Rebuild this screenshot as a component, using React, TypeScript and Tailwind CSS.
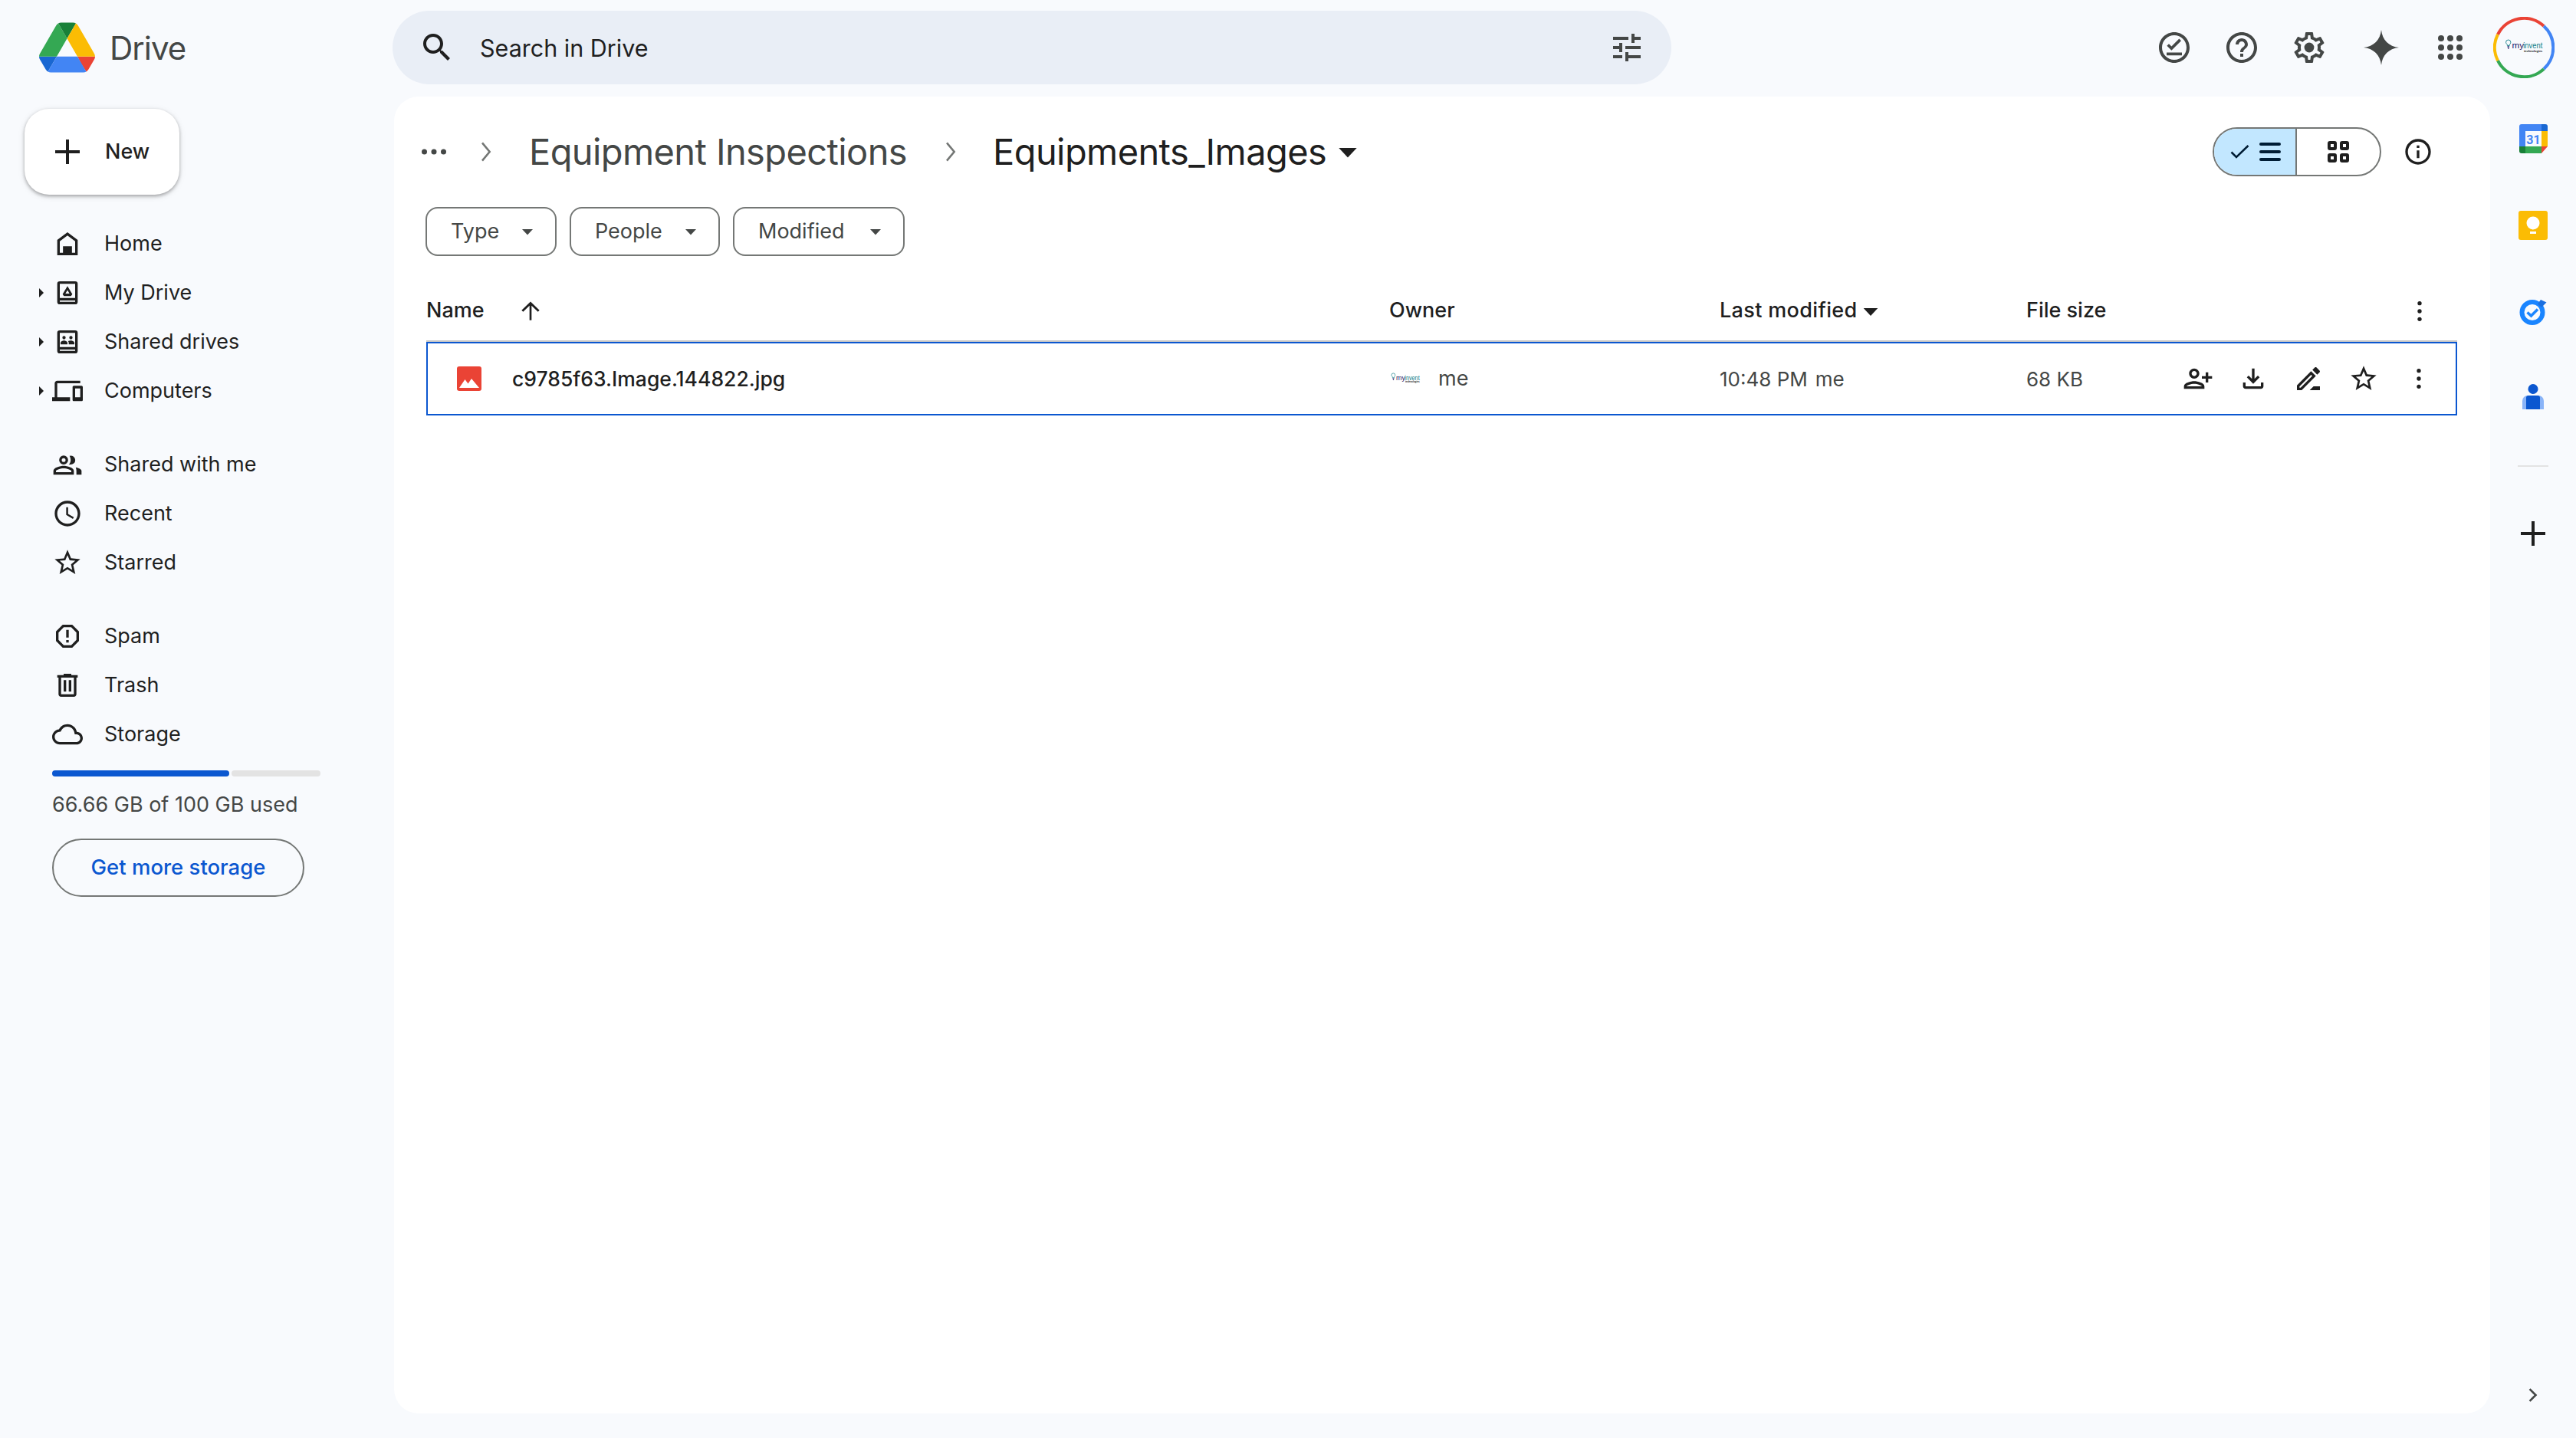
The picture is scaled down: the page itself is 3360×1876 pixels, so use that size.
import React from "react";

const FONT = "[font-family:Inter,'Noto_Sans',sans-serif]";

function I({ d, s = 40, c = "#1f1f1f", extra }: { d?: string; s?: number; c?: string; extra?: React.ReactNode }) {
  return (
    <svg width={s} height={s} viewBox="0 0 24 24" fill={c} className="shrink-0">
      {d && <path d={d} />}
      {extra}
    </svg>
  );
}

const P = {
  search: "M15.5 14h-.79l-.28-.27C15.41 12.59 16 11.11 16 9.5 16 5.91 13.09 3 9.5 3S3 5.91 3 9.5 5.91 16 9.5 16c1.61 0 3.09-.59 4.23-1.57l.27.28v.79l5 4.99L20.49 19l-4.99-5zm-6 0C7.01 14 5 11.99 5 9.5S7.01 5 9.5 5 14 7.01 14 9.5 11.99 14 9.5 14z",
  tune: "M3 17v2h6v-2H3zM3 5v2h10V5H3zm10 16v-2h8v-2h-8v-2h-2v6h2zM7 9v2H3v2h4v2h2V9H7zm14 4v-2H11v2h10zm-6-4h2V7h4V5h-4V3h-2v6z",
  circle: "M12 2C6.48 2 2 6.48 2 12s4.48 10 10 10 10-4.48 10-10S17.52 2 12 2zm0 18c-4.41 0-8-3.59-8-8s3.59-8 8-8 8 3.59 8 8-3.59 8-8 8z",
  help: "M11 18h2v-2h-2v2zm1-16C6.48 2 2 6.48 2 12s4.48 10 10 10 10-4.48 10-10S17.52 2 12 2zm0 18c-4.41 0-8-3.59-8-8s3.59-8 8-8 8 3.59 8 8-3.59 8-8 8zm0-14c-2.21 0-4 1.79-4 4h2c0-1.1.9-2 2-2s2 .9 2 2c0 2-3 1.75-3 5h2c0-2.25 3-2.5 3-5 0-2.21-1.79-4-4-4z",
  gear: "M19.43 12.98c.04-.32.07-.64.07-.98 0-.34-.03-.66-.07-.98l2.11-1.65c.19-.15.24-.42.12-.64l-2-3.46c-.09-.16-.26-.25-.44-.25-.06 0-.12.01-.17.03l-2.49 1c-.52-.4-1.08-.73-1.69-.98l-.38-2.65C14.46 2.18 14.25 2 14 2h-4c-.25 0-.46.18-.49.42l-.38 2.65c-.61.25-1.17.59-1.69.98l-2.49-1c-.06-.02-.12-.03-.18-.03-.17 0-.34.09-.43.25l-2 3.46c-.13.22-.07.49.12.64l2.11 1.65c-.04.32-.07.65-.07.98 0 .33.03.66.07.98l-2.11 1.65c-.19.15-.24.42-.12.64l2 3.46c.09.16.26.25.44.25.06 0 .12-.01.17-.03l2.49-1c.52.4 1.08.73 1.69.98l.38 2.65c.03.24.24.42.49.42h4c.25 0 .46-.18.49-.42l.38-2.65c.61-.25 1.17-.59 1.69-.98l2.49 1c.06.02.12.03.18.03.17 0 .34-.09.43-.25l2-3.46c.12-.22.07-.49-.12-.64l-2.11-1.65zm-1.98-1.71c.04.31.05.52.05.73 0 .21-.02.43-.05.73l-.14 1.13.89.7 1.08.84-.7 1.21-1.27-.51-1.04-.42-.9.68c-.43.32-.84.56-1.25.73l-1.06.43-.16 1.13-.2 1.35h-1.4l-.19-1.35-.16-1.13-1.06-.43c-.43-.18-.83-.41-1.23-.71l-.91-.7-1.06.43-1.27.51-.7-1.21 1.08-.84.89-.7-.14-1.13c-.03-.31-.05-.54-.05-.74s.02-.43.05-.73l.14-1.13-.89-.7-1.08-.84.7-1.21 1.27.51 1.04.42.9-.68c.43-.32.84-.56 1.25-.73l1.06-.43.16-1.13.2-1.35h1.39l.19 1.35.16 1.13 1.06.43c.43.18.83.41 1.23.71l.91.7 1.06-.43 1.27-.51.7 1.21-1.07.85-.89.7.14 1.13z",
  clock: "M11.99 2C6.47 2 2 6.48 2 12s4.47 10 9.99 10C17.52 22 22 17.52 22 12S17.52 2 11.99 2zM12 20c-4.42 0-8-3.58-8-8s3.58-8 8-8 8 3.58 8 8-3.58 8-8 8zm.5-13H11v6l5.25 3.15.75-1.23-4.5-2.67z",
  star: "M22 9.24l-7.19-.62L12 2 9.19 8.63 2 9.24l5.46 4.73L5.82 21 12 17.27 18.18 21l-1.63-7.03L22 9.24zM12 15.4l-3.76 2.27 1-4.28-3.32-2.88 4.38-.38L12 6.1l1.71 4.04 4.38.38-3.32 2.88 1 4.28L12 15.4z",
  spam: "M15.73 3H8.27L3 8.27v7.46L8.27 21h7.46L21 15.73V8.27L15.73 3zM19 14.9L14.9 19H9.1L5 14.9V9.1L9.1 5h5.8L19 9.1v5.8zM11 7h2v6h-2zM11 15h2v2h-2z",
  trash: "M15 4V3H9v1H4v2h1v13c0 1.1.9 2 2 2h10c1.1 0 2-.9 2-2V6h1V4h-5zm2 15H7V6h10v13zM9 8h2v9H9zm4 0h2v9h-2z",
  cloud: "M19.35 10.04C18.67 6.59 15.64 4 12 4 9.11 4 6.6 5.64 5.35 8.04 2.34 8.36 0 10.91 0 14c0 3.31 2.69 6 6 6h13c2.76 0 5-2.24 5-5 0-2.64-2.05-4.78-4.65-4.96zM19 18H6c-2.21 0-4-1.79-4-4 0-2.05 1.53-3.76 3.56-3.97l1.07-.11.5-.95C8.08 7.14 9.94 6 12 6c2.62 0 4.88 1.86 5.39 4.43l.3 1.5 1.53.11c1.56.1 2.78 1.41 2.78 2.96 0 1.65-1.35 3-3 3z",
  devices: "M4 6h18V4H4c-1.1 0-2 .9-2 2v11H0v3h14v-3H4V6zm19 2h-6c-.55 0-1 .45-1 1v10c0 .55.45 1 1 1h6c.55 0 1-.45 1-1V9c0-.55-.45-1-1-1zm-1 9h-4v-7h4v7z",
  home: "M12 3 4 9v12h16V9l-8-6zm6 16h-2.5v-5h-7v5H6v-9l6-4.5 6 4.5v9z",
  download: "M18 15v3H6v-3H4v3c0 1.1.9 2 2 2h12c1.1 0 2-.9 2-2v-3h-2zm-1-4-1.41-1.41L13 12.17V4h-2v8.17L8.41 9.59 7 11l5 5 5-5z",
  rename: "M14.06 9.02l.92.92L5.92 19H5v-.92l9.06-9.06M17.66 3c-.25 0-.51.1-.7.29l-1.83 1.83 3.75 3.75 1.83-1.83c.39-.39.39-1.02 0-1.41l-2.34-2.34c-.2-.2-.45-.29-.71-.29zm-3.6 3.19L3 17.25V21h3.75L17.81 9.94l-3.75-3.75zM13 21h8v-3h-5z",
  personAdd: "M15 12c2.21 0 4-1.79 4-4s-1.79-4-4-4-4 1.79-4 4 1.79 4 4 4zm0-6c1.1 0 2 .9 2 2s-.9 2-2 2-2-.9-2-2 .9-2 2-2zm0 8c-2.67 0-8 1.34-8 4v2h16v-2c0-2.66-5.33-4-8-4zm-6 4c.22-.72 3.31-2 6-2 2.7 0 5.8 1.29 6 2H9zm-3-3v-3h3v-2H6V7H4v3H1v2h3v3h2z",
  info: "M11 7h2v2h-2zm0 4h2v6h-2zm1-9C6.48 2 2 6.48 2 12s4.48 10 10 10 10-4.48 10-10S17.52 2 12 2zm0 18c-4.41 0-8-3.59-8-8s3.59-8 8-8 8 3.59 8 8-3.59 8-8 8z",
  plus: "M11 4h2v7h7v2h-7v7h-2v-7H4v-2h7z",
  chevron: "M9 5.5 10.2 4.5 16.4 12 10.2 19.5 9 18.5 14.4 12z",
  right: "M9.4 5.400 8 6.800 13.200 12 8 17.200l1.400 1.400L16 12z",
  up: "M11.200 19V7.600L6.200 12.500 5 11.200l7-6.700 7 6.700-1.200 1.300-5-4.900V19z",
};

function DriveBook({ people }: { people?: boolean }) {
  return (
    <I
      extra={
        <>
          <path d="M6 3h12a2 2 0 0 1 2 2v14a2 2 0 0 1-2 2H6a2 2 0 0 1-2-2V5a2 2 0 0 1 2-2zm0 2v11h12V5H6zm0 13v1h12v-1H6z" fillRule="evenodd" />
          {people ? (
            <path d="M9.3 7.4a1.3 1.3 0 1 1 0 2.6 1.3 1.3 0 0 1 0-2.6zm5.4 0a1.3 1.3 0 1 1 0 2.6 1.3 1.3 0 0 1 0-2.6zM6.6 14v-1.2c0-1.2 1.8-1.9 2.7-1.9s2.7.7 2.7 1.9V14H6.6zm6.4 0v-1.2c0-.5-.2-1-.6-1.4.7-.3 1.6-.5 2.3-.5.9 0 2.7.7 2.7 1.9V14H13z" />
          ) : (
            <path d="M12 6.8l3.8 6.2-1 1.6H9.2l-1-1.6L12 6.8zm0 3.1-1.6 2.7h3.2L12 9.9z" fillRule="evenodd" />
          )}
        </>
      }
    />
  );
}

function SharedMe() {
  return (
    <I
      extra={
        <>
          <path d="M9 5a3.5 3.5 0 1 1 0 7 3.5 3.5 0 0 1 0-7zm0 2a1.5 1.5 0 1 0 0 3 1.5 1.5 0 0 0 0-3zM9 13c2.7 0 8 1.3 8 4v3H1v-3c0-2.7 5.3-4 8-4zm0 2c-2.6 0-5.7 1.2-6 2v1h12v-1c-.3-.8-3.4-2-6-2z" fillRule="evenodd" />
          <path d="M13.6 5.2A3.5 3.5 0 1 1 14 12c-.4 0-.6 0-.9-.1 1-1 1.4-2.1 1.4-3.4 0-1.2-.3-2.3-.9-3.3zM18.5 14.2c2.3.5 4.5 1.4 4.5 2.8v3h-4v-3c0-1.1-.2-2-.5-2.8z" />
        </>
      }
    />
  );
}

const Caret = ({ c = "#444746", s = 24 }: { c?: string; s?: number }) => (
  <svg width={s} height={s} viewBox="0 0 24 24" className="shrink-0">
    <path d="M5 9h14l-7 7.500z" fill={c} />
  </svg>
);

const More = ({ s = 40 }: { s?: number }) => (
  <I s={s} extra={<><circle cx="12" cy="5.800" r="1.600" /><circle cx="12" cy="12" r="1.600" /><circle cx="12" cy="18.200" r="1.600" /></>} />
);

function NavRow({ icon, label, caret }: { icon: React.ReactNode; label: string; caret?: boolean }) {
  return (
    <div className="flex h-16 items-center text-[27px] text-[#1f1f1f]">
      <div className="flex w-[60px] pl-[48px]">
        {caret && (
          <svg width="12" height="16" viewBox="0 0 12 16"><path d="M3 2l6 6-6 6z" fill="#1f1f1f" /></svg>
        )}
      </div>
      <div className="flex w-[56px] justify-center">{icon}</div>
      <span className="ml-[20px]">{label}</span>
    </div>
  );
}

function Brand({ w, h }: { w: number; h: number }) {
  return (
    <svg width={w} height={h} viewBox="0 0 60 26" className="overflow-visible">
      <path d="M3 4.500a3.600 3.600 0 0 1 7.200 0c0 1.500-.9 2.600-1.800 3.400v1.600H5V7.900C3.900 7.100 3 6 3 4.500z" fill="none" stroke="#0e7c86" strokeWidth="1" />
      <rect x="5.200" y="10.500" width="3" height="1.600" fill="#1b1464" />
      <rect x="5.800" y="13" width="1.800" height="1.400" fill="#1b1464" />
      <text x="12" y="14" fontSize="12.500" fill="#1b1464" fontFamily="Liberation Sans, sans-serif" textLength="18" lengthAdjust="spacingAndGlyphs">my</text>
      <text x="29" y="14" fontSize="12.500" fill="#0e7c86" fontFamily="Liberation Sans, sans-serif" textLength="29" lengthAdjust="spacingAndGlyphs">invent</text>
      <text x="30" y="19" fontSize="4" fontWeight="700" fill="#222" fontFamily="Liberation Sans, sans-serif" textLength="28" lengthAdjust="spacingAndGlyphs">technologies</text>
    </svg>
  );
}

function HeaderIcon({ w, children }: { w: string; children: React.ReactNode }) {
  return <div className={`flex justify-center ${w}`}>{children}</div>;
}

function Chip({ label, w }: { label: string; w: string }) {
  return (
    <div className={`flex h-16 items-center justify-between rounded-2xl border-2 border-[#747775] pl-[31px] pr-[24px] text-[27px] text-[#444746] ${w}`}>
      <span>{label}</span>
      <Caret />
    </div>
  );
}

export default function App() {
  return (
    <div className={`flex h-[1876px] w-[3360px] flex-col overflow-hidden bg-[#f8fafd] ${FONT}`}>
      {/* Top bar */}
      <header className="flex h-[126px] shrink-0 items-start pt-[14px]">
        <div className="flex h-24 w-[512px] shrink-0 items-center pl-[51px]">
          <svg width="73" height="66" viewBox="0 0 87.3 78">
            <path d="m6.6 66.85 3.85 6.65c.8 1.4 1.95 2.5 3.3 3.3l13.75-23.8h-27.5c0 1.55.4 3.1 1.2 4.5z" fill="#1967d2" />
            <path d="m43.65 25-13.75-23.8c-1.35.8-2.5 1.9-3.3 3.3l-25.4 44a9.06 9.06 0 0 0 -1.2 4.5h27.5z" fill="#34a853" />
            <path d="m73.55 76.8c1.35-.8 2.5-1.9 3.3-3.3l1.6-2.75 7.65-13.25c.8-1.4 1.2-2.95 1.2-4.5h-27.502l5.852 11.5z" fill="#ea4335" />
            <path d="m43.65 25 13.75-23.8c-1.35-.8-2.9-1.2-4.5-1.2h-18.5c-1.6 0-3.15.45-4.5 1.2z" fill="#188038" />
            <path d="m59.8 53h-32.3l-13.75 23.8c1.35.8 2.9 1.2 4.5 1.2h50.8c1.6 0 3.15-.45 4.5-1.2z" fill="#4285f4" />
            <path d="m73.4 26.5-12.7-22c-.8-1.4-1.95-2.5-3.3-3.3l-13.75 23.8 16.15 28h27.45c0-1.55-.4-3.1-1.2-4.5z" fill="#fbbc04" />
          </svg>
          <span className="ml-[19px] text-[42px] tracking-[-1px] text-[#444746]">Drive</span>
        </div>
        <div className="flex h-24 w-[1668px] shrink-0 items-center rounded-[48px] bg-[#e9eef6] pl-[34px] pr-[34px]">
          <I d={P.search} s={48} c="#1f1f1f" />
          <span className="ml-[32px] pt-[2px] text-[30.500px] text-[#1f1f1f]">Search in Drive</span>
          <div className="ml-auto"><I d={P.tune} s={48} c="#444746" /></div>
        </div>
        <div className="flex h-24 items-center pl-[632px]">
          <HeaderIcon w="w-12"><I s={48} c="#444746" d={P.circle} extra={<path d="M7 15.3h10v1.8H7zM10.2 13.9 7.2 10.9l1.3-1.3 1.7 1.7 5-5 1.3 1.3z" />} /></HeaderIcon>
          <HeaderIcon w="w-12 ml-[40px]"><I s={48} c="#444746" d={P.help} /></HeaderIcon>
          <HeaderIcon w="w-12 ml-[40px]"><I s={48} c="#444746" d={P.gear} extra={<circle cx="12" cy="12" r="3.200" />} /></HeaderIcon>
          <HeaderIcon w="w-12 ml-[46px]"><I s={48} c="#444746" d="M12 .5c.7 6.6 4.9 10.8 11.5 11.5-6.6.7-10.8 4.9-11.5 11.5C11.3 16.9 7.1 12.700 .5 12 7.1 11.300 11.300 7.100 12 .5z" /></HeaderIcon>
          <HeaderIcon w="w-12 ml-[42px]">
            <I s={48} c="#444746" extra={[6, 12, 18].flatMap((y) => [6, 12, 18].map((x) => <circle key={`${x}${y}`} cx={x} cy={y} r="2" />))} />
          </HeaderIcon>
          <div className="relative ml-[32px] flex h-20 w-20 items-center justify-center">
            <svg width="80" height="80" viewBox="0 0 80 80" className="absolute inset-0">
              <g fill="none" strokeWidth="4">
                <path d="M6 23A38 38 0 0 1 66 12" stroke="#ea4335" />
                <path d="M66 12A38 38 0 0 1 66 68" stroke="#4285f4" />
                <path d="M66 68A38 38 0 0 1 6 57" stroke="#34a853" />
                <path d="M6 57A38 38 0 0 1 6 23" stroke="#fbbc04" />
              </g>
            </svg>
            <Brand w={52} h={23} />
          </div>
        </div>
      </header>

      <div className="flex min-h-0 flex-1">
        {/* Sidebar */}
        <aside className="w-[514px] shrink-0 pt-[16px]">
          <div className="ml-[32px] flex h-[112px] w-[202px] items-center rounded-[32px] bg-white pl-[32px] shadow-[0_2px_4px_rgba(0,0,0,0.3),0_2px_10px_rgba(0,0,0,0.1)]">
            <I d={P.plus} s={48} c="#1f1f1f" />
            <span className="ml-[25px] text-[27px] font-medium text-[#1f1f1f]">New</span>
          </div>
          <nav className="mt-8 flex flex-col">
            <NavRow label="Home" icon={<I d={P.home} />} />
            <NavRow label="My Drive" caret icon={<DriveBook />} />
            <NavRow label="Shared drives" caret icon={<DriveBook people />} />
            <NavRow label="Computers" caret icon={<I d={P.devices} />} />
            <div className="mt-[32px]"><NavRow label="Shared with me" icon={<SharedMe />} /></div>
            <NavRow label="Recent" icon={<I d={P.clock} />} />
            <NavRow label="Starred" icon={<I d={P.star} />} />
            <div className="mt-8"><NavRow label="Spam" icon={<I d={P.spam} />} /></div>
            <NavRow label="Trash" icon={<I d={P.trash} />} />
            <NavRow label="Storage" icon={<I d={P.cloud} />} />
          </nav>
          <div className="ml-[68px] mt-[15px] flex h-2 w-[350px]">
            <div className="h-2 w-[231px] rounded-full bg-[#0b57d0]" />
            <div className="ml-[3px] h-2 flex-1 rounded-full bg-[#e3e3e3]" />
          </div>
          <div className="ml-[68px] mt-[20px] text-[27px] leading-[34px] text-[#444746]">66.66 GB of 100 GB used</div>
          <div className="ml-[68px] mt-[27px] flex h-[76px] w-[329px] items-center justify-center rounded-full border-2 border-[#747775] text-[27.500px] font-medium text-[#0b57d0]">
            Get more storage
          </div>
        </aside>

        {/* Main card */}
        <main className="mb-8 min-w-0 flex-1 rounded-[32px] bg-white pl-[41px] pr-[43px] pt-[40px]">
          <div className="flex h-16 items-center">
            <div className="-ml-[9px]">
              <I s={40} c="#444746" extra={<><circle cx="4.500" cy="12" r="2.100" /><circle cx="12" cy="12" r="2.100" /><circle cx="19.500" cy="12" r="2.100" /></>} />
            </div>
            <div className="ml-[27px]"><I d={P.chevron} c="#747775" /></div>
            <span className="ml-[37px] text-[47px] tracking-[-0.6px] text-[#444746]">Equipment Inspections</span>
            <div className="ml-[36px]"><I d={P.chevron} c="#747775" /></div>
            <span className="ml-[36px] text-[47px] tracking-[-0.6px] text-[#1f1f1f]">Equipments_Images</span>
            <div className="ml-[8px]"><Caret c="#1f1f1f" s={40} /></div>
            <div className="ml-auto flex h-16 w-[220px] overflow-hidden rounded-full border-2 border-[#747775]">
              <div className="flex w-[108px] items-center border-r-2 border-[#747775] bg-[#c2e7ff] pl-[21px]">
                <svg width="25" height="20" viewBox="0 0 25 20"><path d="M1.500 10.500 8 17 23.500 2" fill="none" stroke="#001d35" strokeWidth="2.500" /></svg>
                <svg width="28" height="24" viewBox="0 0 28 24" className="ml-[13px]"><g stroke="#001d35" strokeWidth="4" strokeLinecap="round"><path d="M2 2h24M2 12h24M2 22h24" /></g></svg>
              </div>
              <div className="flex flex-1 items-center justify-center">
                <svg width="28" height="28" viewBox="0 0 28 28"><g fill="none" stroke="#1f1f1f" strokeWidth="4"><rect x="2" y="2" width="8" height="8" rx="1" /><rect x="18" y="2" width="8" height="8" rx="1" /><rect x="2" y="18" width="8" height="8" rx="1" /><rect x="18" y="18" width="8" height="8" rx="1" /></g></svg>
              </div>
            </div>
            <div className="ml-[28px] mr-[31px]"><I d={P.info} /></div>
          </div>

          <div className="mt-10 flex gap-[17px]">
            <Chip label="Type" w="w-[171px]" />
            <Chip label="People" w="w-[196px]" />
            <Chip label="Modified" w="w-[224px]" />
          </div>

          <div className="-ml-[0px] mt-8 pl-[1px]">
            <div className="grid h-[80px] grid-cols-[1256px_431px_400px_1fr] items-center border-b-2 border-[#c7c7c7] pt-[1px] text-[27px] font-medium text-[#1f1f1f]">
              <div className="flex items-center">
                <span>Name</span>
                <div className="ml-[40px]"><I d={P.up} /></div>
              </div>
              <span>Owner</span>
              <div className="flex items-center">
                <span className="tracking-[0.35px]">Last modified</span>
                <div className="ml-[1px]"><Caret c="#1f1f1f" s={32} /></div>
              </div>
              <div className="flex items-center justify-between pr-[29px]">
                <span>File size</span>
                <More />
              </div>
            </div>
            <div className="grid h-24 grid-cols-[1254px_431px_400px_1fr] items-center border-2 border-[#0b57d0] text-[26px] text-[#444746]">
              <div className="flex items-center pl-[38px]">
                <svg width="32" height="32" viewBox="0 0 32 32" className="shrink-0">
                  <rect width="32" height="32" rx="3" fill="#ea4335" />
                  <path d="M3 28 10.500 17l4 5.500L19 16l10 12z" fill="#fff" />
                </svg>
                <span className="ml-[40px] pt-[1px] text-[26.500px] font-medium text-[#1f1f1f]">c9785f63.Image.144822.jpg</span>
              </div>
              <div className="flex items-center pt-[1px]">
                <div className="flex w-[42px] justify-center pt-[1px]"><Brand w={40} h={18} /></div>
                <span className="ml-[22px] text-[27px]">me</span>
              </div>
              <span className="pt-[1px]">10:48 PM<span className="ml-[10px]">me</span></span>
              <div className="flex items-center">
                <span className="pt-[1px]">68 KB</span>
                <div className="ml-auto flex gap-8 pr-[28px]">
                  <svg width="40" height="40" viewBox="0 0 24 24" fill="#1f1f1f"><path transform="matrix(-1 0 0 1 24 0)" d={P.personAdd} /></svg>
                  <I d={P.download} />
                  <I d={P.rename} />
                  <I d={P.star} />
                  <More />
                </div>
              </div>
            </div>
          </div>
        </main>

        {/* Right panel */}
        <aside className="flex w-[112px] shrink-0 flex-col items-center">
          <div className="mt-[36px]">
            <svg width="37" height="38" viewBox="0 0 37 38">
              <path d="M3 0h26v9H8v20H0V3a3 3 0 0 1 3-3z" fill="#4285f4" />
              <path d="M29 0h5a3 3 0 0 1 3 3v6h-8z" fill="#1967d2" />
              <path d="M29 9h8v20h-8z" fill="#fbbc04" />
              <path d="M8 29h21v9H8z" fill="#34a853" />
              <path d="M0 29h8v9H3a3 3 0 0 1-3-3z" fill="#188038" />
              <path d="M29 29h8l-8 9z" fill="#ea4335" />
              <text x="18.500" y="25.500" textAnchor="middle" fontSize="16" fontWeight="700" fill="#4285f4" fontFamily="Roboto, sans-serif">31</text>
            </svg>
          </div>
          <div className="mt-[75px]">
            <svg width="38" height="38" viewBox="0 0 38 38">
              <rect width="38" height="38" rx="3" fill="#fbbc04" />
              <circle cx="19" cy="16" r="8.500" fill="#fff" />
              <rect x="15" y="27" width="8" height="3" fill="#fff" />
            </svg>
          </div>
          <div className="mt-[77px]">
            <svg width="36" height="34" viewBox="0 0 36 34">
              <circle cx="17" cy="17.500" r="13.500" fill="none" stroke="#1a85ff" strokeWidth="6" />
              <path d="M10.500 17.500l5 4.500L24 13.500" fill="none" stroke="#1a85ff" strokeWidth="3.500" />
              <path d="M28 1l7.500 3.500-6.500 6.500-5-4.500z" fill="#1a6fe0" />
            </svg>
          </div>
          <div className="mt-[77px]">
            <svg width="28" height="33" viewBox="0 0 28 33">
              <circle cx="14" cy="6.500" r="6.500" fill="#0b57d0" />
              <path d="M7 15h14a7 7 0 0 1 7 7v11H0V22a7 7 0 0 1 7-7z" fill="#8ab4f8" />
              <path d="M8 15h12a3 3 0 0 1 3 3v15H5V18a3 3 0 0 1 3-3z" fill="#0b57d0" />
            </svg>
          </div>
          <div className="mt-[73px] h-[2px] w-10 bg-[#e3e3e3]" />
          <div className="mt-[63px]"><I d={P.plus} s={48} c="#1f1f1f" /></div>
          <div className="mt-auto mb-[40px]"><I d={P.right} s={32} c="#444746" /></div>
        </aside>
      </div>
    </div>
  );
}
